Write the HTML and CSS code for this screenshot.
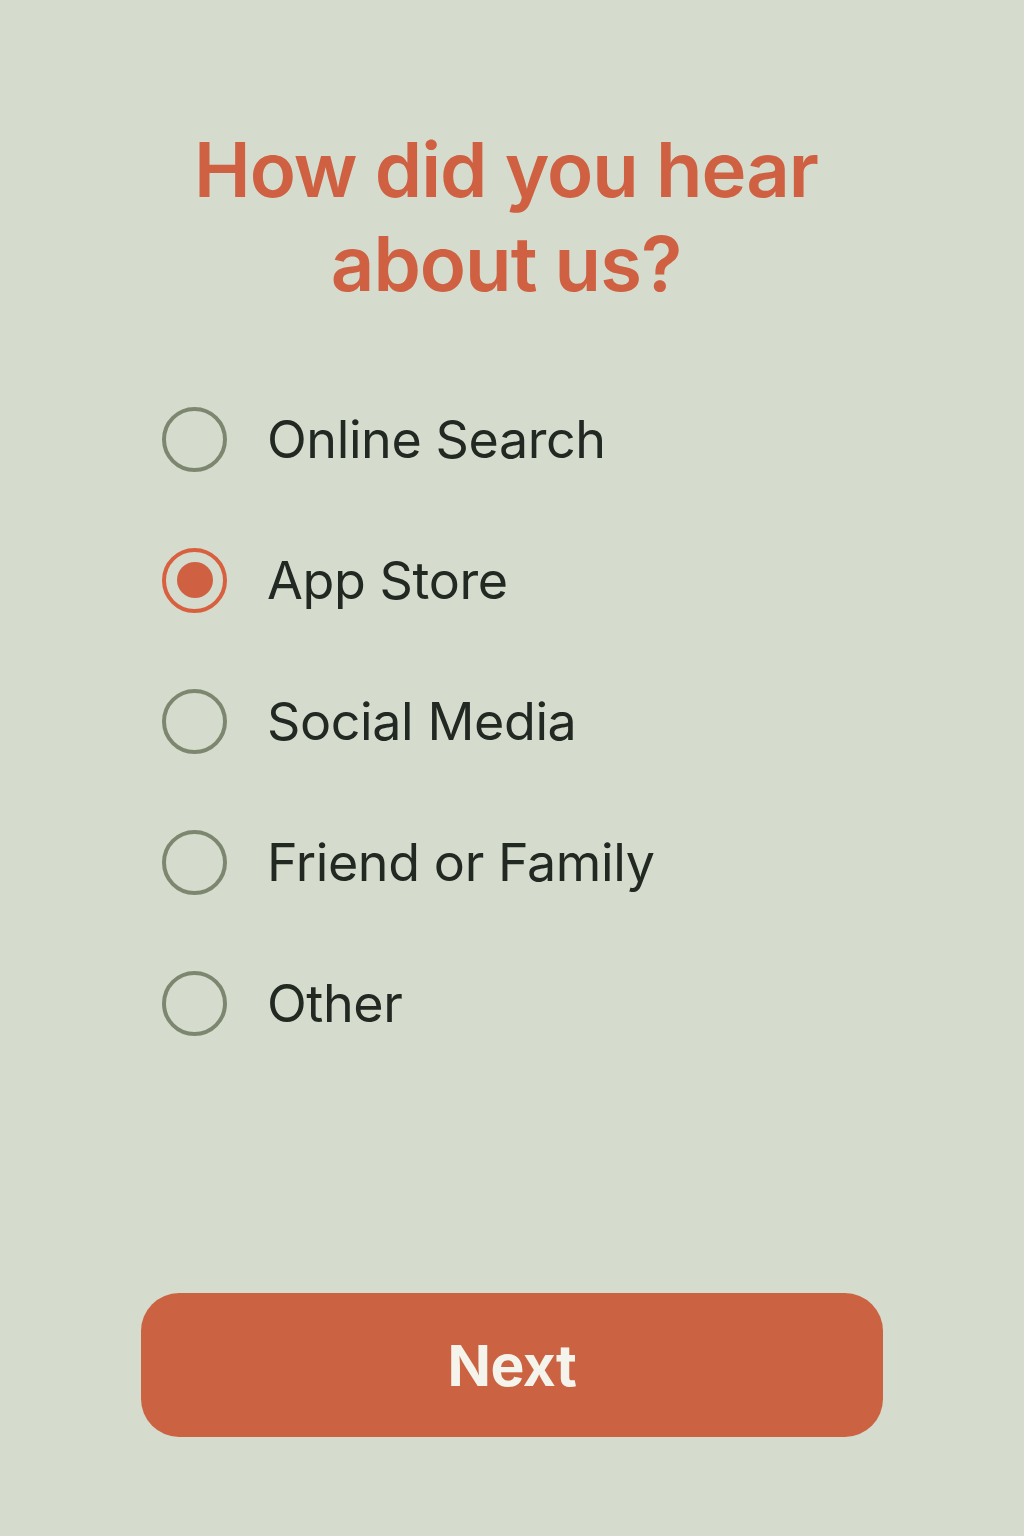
FILE: index.html
```html
<!DOCTYPE html>
<html lang="en">
<head>
<meta charset="utf-8">
<title>How did you hear about us?</title>
<link rel="stylesheet" href="styles.css">
</head>
<body>
<main class="screen">
  <h1 class="title">How did you hear<br>about us?</h1>
  <ul class="options">
    <li class="option"><span class="radio"></span><span class="label">Online Search</span></li>
    <li class="option selected"><span class="radio"></span><span class="label">App Store</span></li>
    <li class="option"><span class="radio"></span><span class="label">Social Media</span></li>
    <li class="option"><span class="radio"></span><span class="label">Friend or Family</span></li>
    <li class="option"><span class="radio"></span><span class="label">Other</span></li>
  </ul>
  <button class="next" type="button">Next</button>
</main>
</body>
</html>
```
FILE: styles.css
```css
html, body {
  margin: 0;
  padding: 0;
  background: #d5dccd;
}
.screen {
  width: 1024px;
  height: 1536px;
  box-sizing: border-box;
  padding: 122px 141px 0 162px;
  display: flex;
  flex-direction: column;
  font-family: Inter, "Noto Sans", sans-serif;
}
.title {
  margin: 0 12px 0 -21px;
  text-align: center;
  color: #cf6142;
  font-size: 76px;
  font-weight: 600;
  line-height: 94px;
  letter-spacing: -1px;
}
.options {
  list-style: none;
  margin: 97px 0 0 0;
  padding: 0;
  display: flex;
  flex-direction: column;
  gap: 77px;
}
.option {
  display: flex;
  align-items: center;
  gap: 40px;
  height: 64px;
}
.radio {
  width: 65px;
  height: 65px;
  box-sizing: border-box;
  border: 4px solid #7d8770;
  border-radius: 50%;
  flex: none;
  display: flex;
  align-items: center;
  justify-content: center;
}
.selected .radio {
  border-color: #d8603e;
}
.selected .radio::after {
  content: "";
  width: 36px;
  height: 36px;
  border-radius: 50%;
  background: #cf6142;
}
.label {
  color: #222822;
  font-size: 52px;
  font-weight: 400;
  letter-spacing: -0.4px;
}
.next {
  margin: 258px 0 0 -21px;
  width: 742px;
  height: 144px;
  border: none;
  border-radius: 38px;
  background: #cb6342;
  color: #f4f4ec;
  font-family: Inter, "Noto Sans", sans-serif;
  font-size: 57px;
  font-weight: 700;
  letter-spacing: -0.5px;
}
```
